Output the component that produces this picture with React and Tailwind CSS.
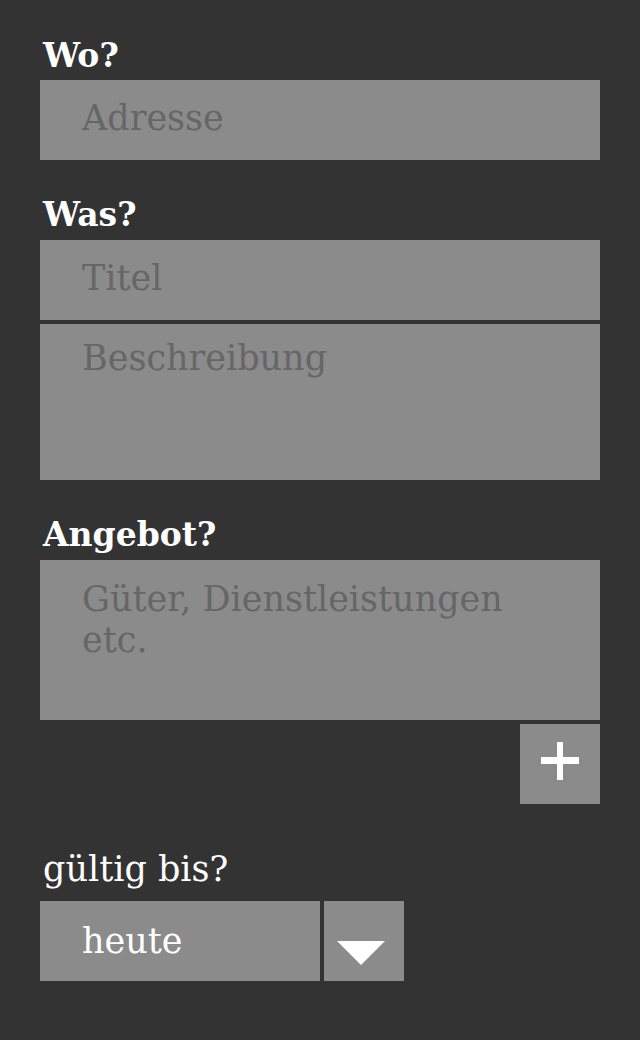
const font = { fontFamily: '"DejaVu Serif", serif' };

const Label = ({ children, className = "" }) => (
  <div className={`text-[33px] leading-[40px] font-bold text-white pl-[3px] ${className}`}>
    {children}
  </div>
);

const fieldBase =
  "block w-full bg-[#8b8b8b] text-[35px] text-white placeholder:text-[#666666] pl-[42px] pr-10 outline-none border-0";

export default function App() {
  return (
    <div className="min-h-[1040px] bg-[#333333] px-10 pt-[36px] pb-10" style={font}>
      <Label className="mb-[4px]">Wo?</Label>
      <input className={`${fieldBase} h-20 pb-1`} placeholder="Adresse" />

      <Label className="mt-[35px] mb-[5px]">Was?</Label>
      <input className={`${fieldBase} h-20 pb-1`} placeholder="Titel" />
      <textarea
        className={`${fieldBase} mt-1 h-[156px] resize-none pt-[14px] leading-[41px]`}
        placeholder="Beschreibung"
      />

      <Label className="mt-[35px] mb-[5px]">Angebot?</Label>
      <textarea
        className={`${fieldBase} h-40 resize-none pt-[19px] leading-[41px]`}
        placeholder="Güter, Dienstleistungen etc."
      />
      <div className="flex justify-end mt-1">
        <button className="w-20 h-20 bg-[#8b8b8b] flex items-center justify-center">
          <svg width="38" height="38" viewBox="0 0 38 38" className="-mt-1.5">
            <rect x="0" y="15" width="38" height="7" fill="#fff" />
            <rect x="16" y="0" width="6" height="38" fill="#fff" />
          </svg>
        </button>
      </div>

      <div className="mt-[45px] mb-[12px] pl-[3px] text-[35px] leading-[40px] text-white">
        gültig bis?
      </div>
      <div className="flex gap-1">
        <div className="w-[280px] h-20 bg-[#8b8b8b] flex items-center pl-[42px] text-[35px] text-white">
          heute
        </div>
        <button className="w-20 h-20 bg-[#8b8b8b] flex items-center justify-center">
          <svg width="48" height="24" viewBox="0 0 48 24" className="mt-6 -ml-1.5">
            <polygon points="0,0 48,0 24,24" fill="#fff" />
          </svg>
        </button>
      </div>
    </div>
  );
}
